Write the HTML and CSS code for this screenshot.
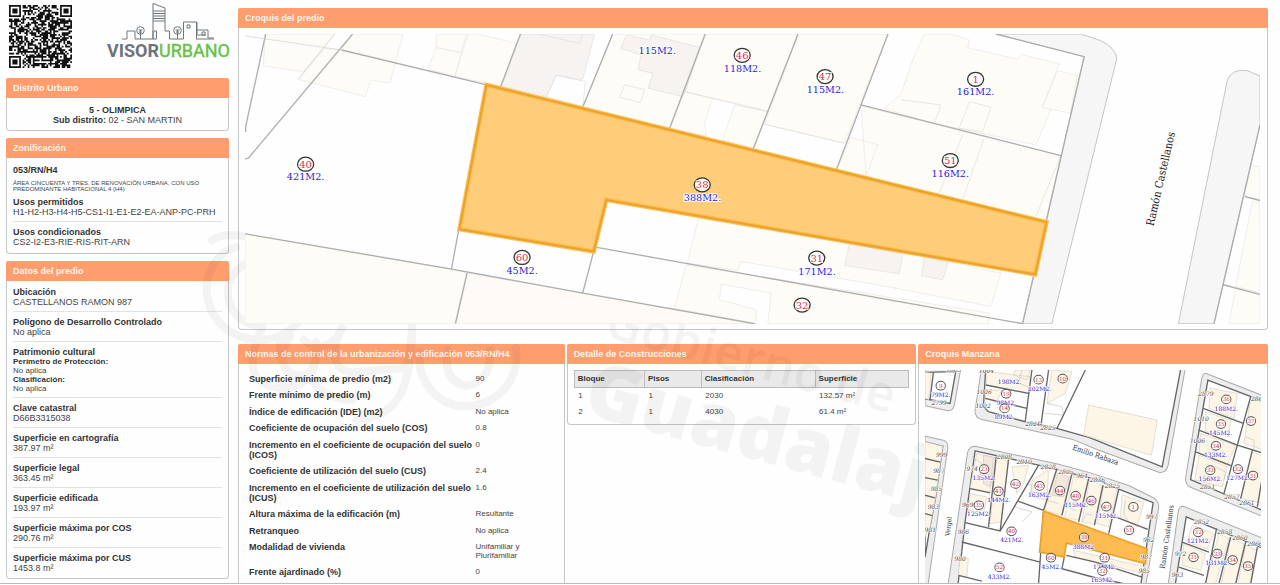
FILE: index.html
```html
<!DOCTYPE html>
<html lang="es">
<head>
<meta charset="utf-8">
<title>Visor Urbano - Ficha del predio</title>
<link rel="stylesheet" href="styles.css">
</head>
<body>
<div class="sheet">
  <svg class="watermark" viewBox="0 0 1280 585" aria-hidden="true">
    <g class="wm-lines">
      <path d="M212 240q12-8 36-3M236 247C190 262 198 340 262 340C300 338 318 300 300 272"/>
      <path d="M250 262C216 274 222 324 262 326"/>
      <path d="M262 328c-14 30-16 56 18 60q40 0 36-46M290 336q-16 26 2 38q26 8 24-30M342 328c-14 26-8 46 14 44l50-4q6-22 6-44M352 400q-30-2-40-20"/>
      <path d="M412 336c-2 44-10 82-56 84M420 352c-4 26 16 54 44 54c34 0 56-26 52-58M448 350q-6 30 18 36q26-4 24-36M280 336v22M304 340q14 14 30 0"/>
    </g>
    <g transform="rotate(15 605 337)"><text class="wm-small" x="603" y="337">Gobierno de</text></g>
    <g transform="rotate(15 585 410)"><text class="wm-big" x="582" y="414">Guadalaj</text></g>
  </svg>

  <aside class="side">
    <header class="brand">
      <svg class="qr" id="qr" viewBox="0 0 37 37" role="img" aria-label="Código QR"></svg>
      <svg class="logo" viewBox="0 0 122 56" role="img" aria-label="Visor Urbano">
        <g class="logo-lines">
          <path d="M15 36h5V28h8v8h18V0.500L58 5V28M46 28v8h3.500V28.500M49.500 36V28h-3M58 28h4.500v8h14V19h13v17M90 27h11v8h6M90 19v13h9M89 36h18"/>
          <path d="M46 8h12M46 10.500h12M46 13h12M46 15.500h12M46 18h12M80 22h3v3h-3zM95 29h3v3h-3z"/>
          <circle cx="33.500" cy="27.500" r="3.800"/><path d="M33.500 27v9M31.500 27h4M32 29h3"/>
          <circle cx="70.500" cy="27.500" r="3.800"/><path d="M70.500 27v9M68.500 27h4M69 29h3"/>
        </g>
        <text class="logo-text" x="0" y="54">VISOR<tspan class="logo-green">URBANO</tspan></text>
      </svg>
    </header>

    <section class="card">
      <h2>Distrito Urbano</h2>
      <div class="district"><b>5 - OLIMPICA</b><span><b>Sub distrito:</b> 02 - SAN MARTIN</span></div>
    </section>

    <section class="card">
      <h2>Zonificación</h2>
      <div class="zone">
        <div class="item"><b>053/RN/H4</b>
          <p class="tiny">ÁREA CINCUENTA Y TRES, DE RENOVACIÓN URBANA, CON USO PREDOMINANTE HABITACIONAL 4 (H4)</p>
          <b>Usos permitidos</b><span>H1-H2-H3-H4-H5-CS1-I1-E1-E2-EA-ANP-PC-PRH</span></div>
        <div class="item"><b>Usos condicionados</b><span>CS2-I2-E3-RIE-RIS-RIT-ARN</span></div>
      </div>
    </section>

    <section class="card">
      <h2>Datos del predio</h2>
      <div class="data">
        <div class="item"><b>Ubicación</b><span>CASTELLANOS RAMON 987</span></div>
        <div class="item"><b>Polígono de Desarrollo Controlado</b><span>No aplica</span></div>
        <div class="item"><b>Patrimonio cultural</b><b class="sub">Perímetro de Protección:</b><span class="sub">No aplica</span><b class="sub">Clasificación:</b><span class="sub">No aplica</span></div>
        <div class="item"><b>Clave catastral</b><span>D66B3315038</span></div>
        <div class="item"><b>Superficie en cartografía</b><span>387.97 m²</span></div>
        <div class="item"><b>Superficie legal</b><span>363.45 m²</span></div>
        <div class="item"><b>Superficie edificada</b><span>193.97 m²</span></div>
        <div class="item"><b>Superficie máxima por COS</b><span>290.76 m²</span></div>
        <div class="item"><b>Superficie máxima por CUS</b><span>1453.8 m²</span></div>
      </div>
    </section>
  </aside>

  <main class="main">
    <section class="card">
      <h2>Croquis del predio</h2>
      <div class="plot">
        <svg class="map" id="plot-map" viewBox="30 102 3048 870" role="img" aria-label="Croquis del predio 38">
          <g class="cream">
            <path d="M90 102H300L205 215L85 198zM350 102H505L465 250L410 240L390 290L190 238L270 145L320 150zM605 102H695L680 158L603 143z"/>
            <path d="M603 143L680 158L660 230L580 208zM730 102L845 130L800 258L660 230L700 102z"/>
            <path d="M30 702L650 808L695 818L660 972H30z"/>
            <path class="warm" d="M697 820L1045 880L1560 972H662z"/>
            <path d="M1135 102H1410L1315 388L1045 320L1085 225zM1412 102H1690L1600 333L1352 275zM1690 102H1960L1830 430L1590 373z"/>
            <path d="M1350 275L1435 295L1410 365L1415 408L1304 388zM1500 315L1598 335L1560 445L1465 420z"/>
            <path d="M2070 102H2150L2205 120L2200 143L2350 178L2360 163L2475 192L2425 320L2450 328L2405 435L2070 364L1950 325L2000 283L2035 180z"/>
            <path d="M2470 212L2530 227L2508 340L2425 322z"/>
            <path d="M1880 318L2480 467L2435 667L1805 512L1850 412L1930 435L1895 530z"/>
            <path d="M1392 655L2085 772L2300 820L2270 920L1980 865L1985 865L1520 785L1510 812L1358 790z"/>
            <path d="M1355 795L2265 940L2262 972H1600L1610 880L1460 853L1455 900L1565 930V972L1320 925z"/>
            <path d="M3050 498L3078 500V600L3030 590zM3055 605L3078 608V880L3005 860zM3005 865L3078 885V972H2985z"/>
          </g>
          <g class="pink">
            <path d="M860 102H1080L1045 235L1035 240L965 225L935 290L800 258z"/>
            <path d="M1175 105L1245 120L1250 105L1395 142L1345 290L1240 265L1255 220L1210 210L1220 165L1158 145z"/>
            <path d="M1845 732L2005 762L1995 822L1830 797zM2070 772L2142 788L2125 840L2062 828z"/>
          </g>
          <g class="hollow">
            <path d="M965 225L1052 245L1045 320L935 290zM1170 255L1230 268L1218 308L1155 292zM2205 305L2270 322L2245 395L2175 385zM2000 300L2120 315L2100 370"/>
            <path d="M1045 102L1035 130L910 102M1350 275L1600 335M1590 373L1830 430M2185 405L2115 580M2248 418L2185 600M2480 467L2405 650"/>
          </g>
          <path class="pavement" d="M2285 102L2550 170L2365 972H2453L2648 175Q2645 145 2600 122L2540 102zM2833 972L2980 240Q2995 205 3040 212L3078 228V375L2940 972z"/>
          <path class="lot" d="M92 102L32 380V396M353 102L40 475L30 477M320 150L750 253M857 102L798 260M30 702L650 808L1045 880L1560 972M672 688L650 808M697 820L662 972M1077 755L1044 880M1082 742L2365 972M1134 102L1045 320M1412 102L1304 388M1691 102L1556 447M1961 102L1805 512M1880 315L2480 467M2285 102L2550 170L2365 972M3078 375L2940 972M3033 590L3078 602M2968 855L3078 884"/>
          <path class="lot-thin" d="M30 108L320 150M300 102L190 238"/>
          <path class="parcel-halo" d="M755 255L2437 667L2403 824L1115 600L1077 755L674 688z"/>
          <path class="parcel-edge" d="M755 255L2437 667L2403 824L1115 600L1077 755L674 688z"/>
          <g class="street" transform="translate(2758 680) rotate(-77)"><text font-size="33">Ramón Castellanos</text></g>
        </svg>
      </div>
    </section>

    <div class="lower">
      <section class="card open">
        <h2>Normas de control de la urbanización y edificación 053/RN/H4</h2>
        <dl class="norms">
          <div><dt>Superficie mínima de predio (m2)</dt><dd>90</dd></div>
          <div><dt>Frente mínimo de predio (m)</dt><dd>6</dd></div>
          <div><dt>Índice de edificación (IDE) (m2)</dt><dd>No aplica</dd></div>
          <div><dt>Coeficiente de ocupación del suelo (COS)</dt><dd>0.8</dd></div>
          <div><dt>Incremento en el coeficiente de ocupación del suelo (ICOS)</dt><dd>0</dd></div>
          <div><dt>Coeficiente de utilización del suelo (CUS)</dt><dd>2.4</dd></div>
          <div><dt>Incremento en el coeficiente de utilización del suelo (ICUS)</dt><dd>1.6</dd></div>
          <div><dt>Altura máxima de la edificación (m)</dt><dd>Resultante</dd></div>
          <div><dt>Retranqueo</dt><dd>No aplica</dd></div>
          <div><dt>Modalidad de vivienda</dt><dd>Unifamiliar y Plurifamiliar</dd></div>
          <div><dt>Frente ajardinado (%)</dt><dd>0</dd></div>
        </dl>
      </section>

      <section class="card detail">
        <h2>Detalle de Construcciones</h2>
        <div class="table-wrap">
          <table>
            <colgroup><col class="c1"><col class="c2"><col class="c3"><col class="c4"></colgroup>
            <thead><tr><th>Bloque</th><th>Pisos</th><th>Clasificación</th><th>Superficie</th></tr></thead>
            <tbody>
              <tr><td>1</td><td>1</td><td>2030</td><td>132.57 m²</td></tr>
              <tr><td>2</td><td>1</td><td>4030</td><td>61.4 m²</td></tr>
            </tbody>
          </table>
        </div>
      </section>

      <section class="card open">
        <h2>Croquis Manzana</h2>
        <div class="block-wrap">
          <svg class="map mini" id="block-map" viewBox="30 90 1005 639" role="img" aria-label="Croquis de la manzana">
            <g class="curb">
              <path d="M30 80H138L118 195Q112 215 95 211L30 197z"/>
              <path d="M200 80L180 210Q178 233 200 238L470 297L545 328L730 396Q752 400 758 375L810 80z"/>
              <path d="M30 288L85 300Q100 305 98 325L38 740H20z"/>
              <path d="M180 318Q160 318 157 340L98 740H690L730 500Q730 478 705 468L640 436L525 398L430 372z"/>
              <path d="M870 100Q862 100 858 118L810 415Q810 435 825 441L1045 530V168z"/>
              <path d="M803 498Q790 498 788 515L757 740H1045V595z"/>
            </g>
            <g class="inner">
              <path d="M30 97L122 95L105 190L30 176zM212 80L205 200L220 215L330 245L425 265L525 293L740 380L797 80zM30 305L83 318L62 470L45 560L30 650z"/>
              <path d="M180 332L370 375L545 418L610 447L713 487L675 740H128L150 545zM877 120L1045 185V512L825 418zM812 530L1045 625V740H778z"/>
            </g>
            <g class="mini-cream">
              <path d="M30 97L48 100L42 178L30 175zM215 95L345 110L340 160L214 135zM212 150L260 150L245 188L210 175zM300 90H345L335 120L295 105zM410 90L470 95L450 160L395 190zM520 195L725 240L708 345L505 285z"/>
              <path d="M30 305L83 318L62 470L45 560L30 590zM185 340L240 352L225 455L165 443zM243 355L280 362L258 545L225 550zM290 380L340 375L325 430L305 460zM165 460L215 470L205 520L160 510zM350 420L400 390L395 480L350 470z"/>
              <path d="M427 388L468 402L438 525L388 510zM475 405L518 418L490 540L448 530zM523 418L560 435L540 550L500 545zM565 437L605 447L580 560L545 550zM620 463L685 487L665 560L615 530zM135 650L160 655L155 710L130 705zM475 630L690 680V700L480 650z"/>
              <path d="M885 145L965 160L955 235L880 205zM870 215L945 240L940 290L870 275zM855 280L960 315L935 375L850 340zM850 345L935 380L920 440L838 420zM1005 175L1045 190V330L985 310zM1010 335L1045 350V490L975 475z"/>
              <path d="M830 555L895 580L875 625L815 605zM805 610L870 640L855 690L800 675zM910 580L940 595L900 730H870zM945 595L985 610L960 740H915zM990 615L1025 630L1005 740H965z"/>
            </g>
            <g class="mini-pink"><path d="M205 345L235 352L225 440L205 430zM427 400L462 410L445 470L410 465z"/></g>
            <path class="mini-hollow" d="M170 350L200 370L195 420L175 415M320 90L310 130L340 140M395 190L440 200L445 225L390 220M300 500L350 515L320 545M330 430L350 435L345 470M395 480L430 490M455 500L480 510M500 545L515 520L530 525M630 480L625 520L640 545M540 600L600 590M900 380L930 395L925 420M990 290L1015 300V330M620 620L660 640L650 665"/>
            <path class="mini-lot" d="M55 98L45 180M212 135L340 160M210 175L335 205M350 90L330 245M400 90L378 250M510 90L425 265M30 355L76 366M30 412L68 420M30 465L60 473M30 520L52 526M165 445L225 458M243 350L220 560M280 358L255 572M150 547L255 572L370 375M310 483L385 510L425 385M470 400L440 525M520 415L490 545M563 435L537 555M610 447L580 580M600 530L697 567M140 605L375 665M385 510L370 730M447 650L440 685L540 712L675 740M453 645L540 665L680 710M130 705L200 722M863 205L983 250M850 270L965 315L1045 340M840 335L950 378M1005 170L925 460M1010 330L975 475M1045 380L1025 500M800 605L880 635M903 565L870 730M790 680L865 705M945 590L910 730M990 605L960 730M1025 620L1005 730"/>
            <path class="parcel-mini" d="M385 512L695 625L690 670L453 608L447 650L373 635z"/>
            <g class="street street-mini">
              <g transform="translate(104 588) rotate(-84)"><text font-size="20">Vergel</text></g>
              <g transform="translate(470 328) rotate(19)"><text font-size="22">Emilio Rabaza</text></g>
              <g transform="translate(748 686) rotate(-82)"><text font-size="22">Ramón Castellanos</text></g>
            </g>
          </svg>
        </div>
      </section>
    </div>
  </main>
</div>
<script src="maps.js"></script>
</body>
</html>
```
FILE: styles.css
```css
* { box-sizing: border-box; }
body {
  margin: 0;
  background: #fefefe;
  color: #444;
  font-family: "Liberation Sans", Arial, sans-serif;
  font-size: 9px;
  line-height: 10px;
}
h2, p, dl, dd { margin: 0; }
b, dt, th { color: #333; font-weight: bold; }

.sheet {
  position: relative;
  display: grid;
  grid-template-columns: 223px minmax(0, 1fr);
  gap: 9px;
  padding: 0 12px 0 6px;
  border-bottom: 1px solid #bbb;
}
.watermark {
  position: absolute;
  left: 0;
  top: 0;
  width: 100%;
  z-index: 1;
  opacity: .04;
  pointer-events: none;
}
.wm-lines { fill: none; stroke: #000; stroke-width: 8; stroke-linecap: round; }
.wm-small, .wm-big { font-family: "Open Sans", sans-serif; }
.wm-small { font-size: 50px; font-weight: 600; }
.wm-big { font-size: 77px; font-weight: 800; }

.side { display: flex; flex-direction: column; gap: 7px; }
.brand {
  display: flex;
  justify-content: space-between;
  align-items: flex-start;
  padding: 3px 0 3px 3px;
}
.qr { width: 63px; height: 63px; margin-top: 2px; }
.logo { width: 122px; height: 56px; overflow: visible; }
.logo-lines { fill: none; stroke: #70777b; stroke-width: 1; }
.logo-text { font: 700 18px Roboto, sans-serif; fill: #6d757b; }
.logo-green { font-weight: 400; fill: #66c044; stroke: #66c044; stroke-width: .4; }

.card {
  border: 1px solid #c4c7c8;
  border-top: 0;
  border-radius: 4px;
}
.card h2 {
  margin: 0 -1px;
  padding: 5px 7px;
  border-radius: 2px 2px 0 0;
  background: #ff9d6e;
  color: #fff4ec;
  font-size: 9px;
  line-height: 10px;
}
.district {
  display: flex;
  flex-direction: column;
  align-items: center;
  padding: 7px 0 4px;
}
.district span { line-height: 11px; }
.zone { padding: 2px 6px 1px; }
.data { padding: 1px 6px 0; }
.item {
  display: flex;
  flex-direction: column;
  padding: 5px 0 4px;
  border-bottom: 1px solid #e2e2e2;
}
.item:last-child { border-bottom-color: transparent; }
.item .sub { font-size: 8px; line-height: 9px; }
.tiny { padding: 5px 0; font-size: 6px; line-height: 6px; }

.main { display: flex; flex-direction: column; gap: 14px; padding-top: 8px; min-width: 0; }
.plot { padding: 6px 7px 5px 6px; }
.map {
  position: relative;
  z-index: 2;
  display: block;
  width: 100%;
  height: auto;
  background: #fefefe;
}
.lower {
  display: grid;
  grid-template-columns: 326fr 349fr 349fr;
  gap: 2px;
}
.open { display: flex; flex-direction: column; border-bottom: 0; border-radius: 4px 4px 0 0; }
.norms {
  flex: 1;
  display: flex;
  flex-direction: column;
  justify-content: space-between;
  padding: 7px 12px 3px 10px;
}
.norms div { display: grid; grid-template-columns: 226fr 76fr; padding: 3px 0; }
.norms dd { padding-right: 12px; font-size: 8px; line-height: 9px; }
.detail { align-self: start; }
.table-wrap { padding: 6px 6px 4px; }
table { width: 100%; table-layout: fixed; border-collapse: collapse; font-size: 8px; line-height: 10px; }
th { padding: 3px; border: 1px solid #bbb; background: #e9e9e9; text-align: left; }
td { padding: 3px 3px 3px 4px; }
.c1 { width: 21%; }
.c2 { width: 17%; }
.c3 { width: 34%; }
.c4 { width: 28%; }
.block-wrap { padding: 6px 6px 0; }

.cream path { fill: #fefcf6; stroke: #e9e6e2; stroke-width: 2; }
.cream .warm { fill: #fefaf5; }
.pink path { fill: #f7f3f1; stroke: #e4dedb; stroke-width: 2; }
.hollow path { fill: none; stroke: #e0dedb; stroke-width: 2; }
.pavement { fill: #f6f6f6; stroke: #c5c5c5; stroke-width: 3; }
.lot { fill: none; stroke: #aeaeae; stroke-width: 4; }
.lot-thin { fill: none; stroke: #cfcfcf; stroke-width: 2; }
.parcel-halo { fill: #ffcc7a; stroke: #ffbd45; stroke-width: 13; }
.parcel-edge { fill: none; stroke: #e7a233; stroke-width: 6; }
.street text { font-family: "DejaVu Serif Condensed", "DejaVu Serif", serif; fill: #222; }
.street-mini text { fill: #333; }

.curb path { fill: #ededee; stroke: #aaa; stroke-width: 3; }
.inner path { fill: #fefefe; stroke: #666; stroke-width: 4; }
.mini-cream path { fill: #fdf5e6; stroke: #d8d0c4; stroke-width: 2; }
.mini-pink path { fill: #f2e6dd; stroke: #d4c8c0; stroke-width: 2; }
.mini-hollow { fill: none; stroke: #c4c4c4; stroke-width: 2; }
.mini-lot { fill: none; stroke: #666; stroke-width: 4; }
.parcel-mini { fill: #fdbb50; stroke: #e9a12b; stroke-width: 5; }

.ring { fill: #fff; fill-opacity: .7; stroke: #333; }
.num, .area, .house {
  font-family: "DejaVu Serif", serif;
  text-anchor: middle;
  paint-order: stroke;
  stroke: #fff;
}
.num { fill: #e0304a; }
.area { fill: #2a22d8; }
.house { font-style: italic; fill: #444; }
#plot-map .ring { stroke-width: 4; }
#plot-map text.num, #plot-map text.area { stroke-width: 6; }
.mini .ring { stroke-width: 3; stroke: #555; }
.mini .num, .mini .area, .mini .house { stroke-width: 3; }
```
FILE: maps.js
```js
const NS = "http://www.w3.org/2000/svg";

function add(parent, tag, attrs, text) {
  const el = document.createElementNS(NS, tag);
  for (const k in attrs) el.setAttribute(k, attrs[k]);
  if (text) el.textContent = text;
  parent.appendChild(el);
}

// [lot number, x, y, area text, area x, area y]
function labels(svg, list, rx, ry, numSize, areaSize) {
  for (const [n, x, y, area, ax, ay] of list) {
    if (n) {
      add(svg, "ellipse", { cx: x, cy: y, rx, ry, class: "ring" });
      add(svg, "text", { x, y: y + numSize * 0.36, "font-size": numSize, class: "num" }, n);
    }
    if (area) add(svg, "text", { x: ax, y: ay + areaSize * 0.36, "font-size": areaSize, class: "area" }, area);
  }
}

const plot = document.getElementById("plot-map");
labels(plot, [
  ["40", 212, 493, "421M2.", 212, 531], ["60", 862, 773, "45M2.", 862, 811],
  ["", 0, 0, "115M2.", 1268, 151], ["46", 1523, 166, "118M2.", 1524, 205],
  ["47", 1772, 230, "115M2.", 1773, 269], ["38", 1403, 555, "388M2.", 1404, 594],
  ["31", 1747, 775, "171M2.", 1748, 814], ["32", 1703, 916],
  ["1", 2224, 238, "161M2.", 2224, 276], ["51", 2148, 482, "116M2.", 2148, 521]
], 24, 21, 30, 29);

const block = document.getElementById("block-map");
for (const [t, x, y] of [
  ["1003", 116, 90], ["2799", 72, 189], ["1004", 214, 94], ["1006", 207, 156], ["1002", 204, 199],
  ["2821", 353, 253], ["2825", 398, 263], ["999", 80, 345], ["987", 72, 393], ["985", 64, 447],
  ["983", 55, 500], ["981", 46, 568], ["974", 171, 387], ["2808", 268, 349], ["2810", 327, 364],
  ["2828", 399, 381], ["2805", 452, 394], ["964", 500, 406], ["2836", 546, 420], ["2825", 591, 438],
  ["969", 158, 494], ["986", 145, 576], ["980", 135, 656], ["997", 709, 530], ["962", 700, 599],
  ["987", 692, 650], ["985", 686, 691], ["2879", 871, 161], ["2869", 1029, 178], ["1010", 857, 237],
  ["1006", 846, 303], ["2851", 876, 440], ["2857", 949, 469], ["2861", 994, 488], ["2852", 858, 546],
  ["2858", 927, 574], ["2860", 973, 592], ["2866", 1018, 612], ["972", 795, 641], ["963", 786, 703]
]) add(block, "text", { x, y: y + 6, "font-size": 18, class: "house" }, t);

labels(block, [
  ["9", 77, 137, "79M2.", 77, 164], ["", 0, 0, "198M2.", 283, 126], ["13", 370, 119, "202M2.", 373, 146],
  ["10", 442, 116], ["19", 273, 161, "98M2.", 273, 188], ["14", 268, 205, "89M2.", 268, 229],
  ["23", 207, 387, "135M2.", 207, 413], ["42", 301, 431], ["41", 250, 453, "144M2.", 251, 479],
  ["43", 373, 437, "163M2.", 373, 464], ["44", 434, 451], ["48", 481, 467, "115M2.", 482, 493],
  ["46", 528, 481], ["35", 191, 495, "125M2.", 191, 521], ["40", 289, 573, "421M2.", 290, 600],
  ["38", 506, 591, "388M2.", 507, 618], ["60", 407, 652, "45M2.", 408, 678],
  ["52", 253, 681, "433M2.", 253, 708], ["47", 573, 499, "115M2.", 573, 526], ["1", 654, 500],
  ["51", 641, 570], ["31", 568, 652, "171M2.", 568, 678], ["32", 561, 692, "165M2.", 561, 718],
  ["36", 932, 178, "188M2.", 932, 205], ["35", 916, 252, "145M2.", 915, 279],
  ["34", 901, 317, "133M2.", 900, 345], ["33", 884, 390, "156M2.", 884, 417],
  ["37", 1006, 243], ["32", 967, 387, "127M2.", 967, 414], ["31", 1012, 406],
  ["32", 848, 576, "121M2.", 849, 603], ["31", 834, 651], ["33", 905, 640, "131M2.", 905, 667],
  ["34", 951, 659], ["35", 997, 677]
], 14, 13, 17, 18);

// QR modules
const qr = document.getElementById("qr");
const N = 37;
let seed = 20931;
let d = "";
const finder = (x, y, cx, cy) => {
  const r = Math.max(Math.abs(x - cx), Math.abs(y - cy));
  return r > 4 ? null : r === 3 || r < 2;
};
for (let y = 0; y < N; y++) {
  for (let x = 0; x < N; x++) {
    seed = (seed * 48271) % 2147483647;
    let on = seed / 2147483647 > 0.42;
    for (const [cx, cy] of [[3, 3], [33, 3], [3, 33]]) {
      const f = finder(x, y, cx, cy);
      if (f !== null) on = f;
    }
    const a = Math.max(Math.abs(x - 30), Math.abs(y - 30));
    if (a < 3) on = a !== 1;
    if (on) d += `M${x} ${y}h1v1h-1z`;
  }
}
add(qr, "path", { d, fill: "#111" });
```
